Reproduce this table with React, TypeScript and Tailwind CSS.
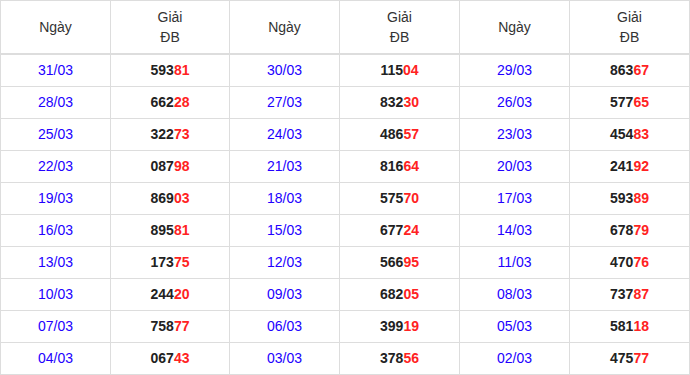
import React from "react";

type Row = [string, string][];

const rows: Row[] = [
  [["31/03", "59381"], ["30/03", "11504"], ["29/03", "86367"]],
  [["28/03", "66228"], ["27/03", "83230"], ["26/03", "57765"]],
  [["25/03", "32273"], ["24/03", "48657"], ["23/03", "45483"]],
  [["22/03", "08798"], ["21/03", "81664"], ["20/03", "24192"]],
  [["19/03", "86903"], ["18/03", "57570"], ["17/03", "59389"]],
  [["16/03", "89581"], ["15/03", "67724"], ["14/03", "67879"]],
  [["13/03", "17375"], ["12/03", "56695"], ["11/03", "47076"]],
  [["10/03", "24420"], ["09/03", "68205"], ["08/03", "73787"]],
  [["07/03", "75877"], ["06/03", "39919"], ["05/03", "58118"]],
  [["04/03", "06743"], ["03/03", "37856"], ["02/03", "47577"]],
];

const cell = "border-r border-b border-[#dddddd] flex items-center justify-center";

const App: React.FC = () => {
  return (
    <div className="w-[690px] h-[375px] bg-white font-['Liberation_Sans',Arial,sans-serif] text-[14px]">
      <div className="grid grid-cols-[110px_119px_110px_120px_110px_120px] border-l border-t border-[#dddddd]">
        {[0, 1, 2].map((i) => (
          <React.Fragment key={"h" + i}>
            <div className={`${cell} h-[54px] border-b-2 text-[#333333]`}>Ngày</div>
            <div className={`${cell} h-[54px] border-b-2 text-[#333333] flex-col leading-[20px]`}>
              <span>Giải</span>
              <span>ĐB</span>
            </div>
          </React.Fragment>
        ))}
        {rows.map((row, r) =>
          row.map(([date, num], c) => (
            <React.Fragment key={r + "-" + c}>
              <div className={`${cell} h-[32px] text-[#2200ff]`}>{date}</div>
              <div className={`${cell} h-[32px] font-bold`}>
                <span className="text-[#222222]">{num.slice(0, 3)}</span>
                <span className="text-[#ff2222]">{num.slice(3)}</span>
              </div>
            </React.Fragment>
          ))
        )}
      </div>
    </div>
  );
};

export default App;
